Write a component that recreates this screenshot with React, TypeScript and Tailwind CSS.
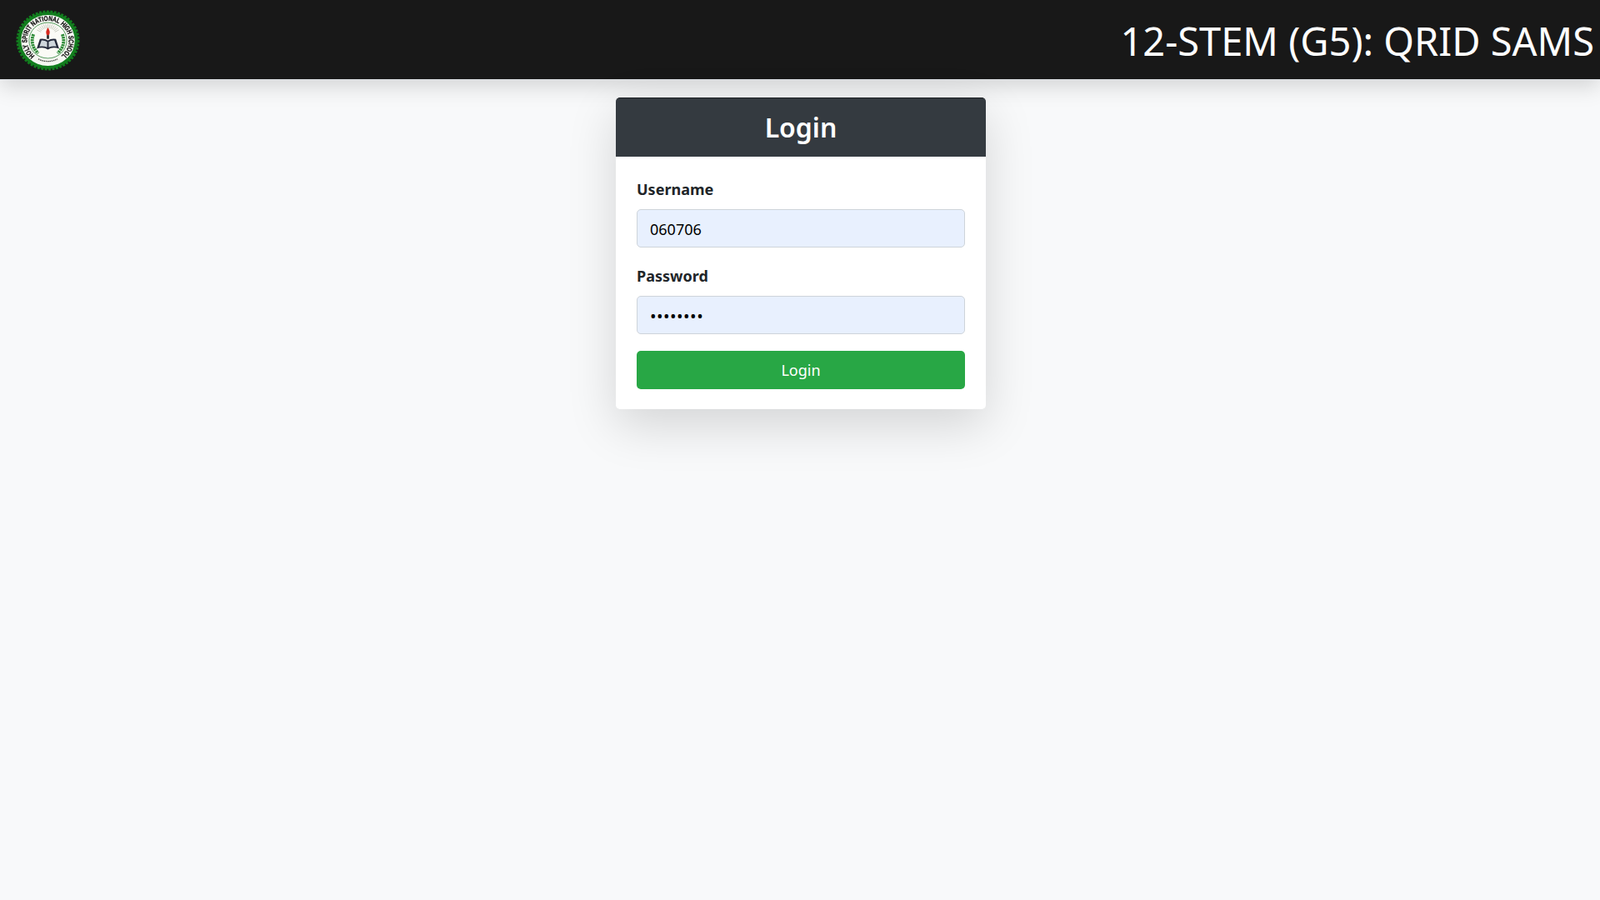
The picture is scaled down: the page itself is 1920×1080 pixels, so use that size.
const rays = Array.from({ length: 13 }, (_, i) => -150 + i * 10)

function SchoolLogo() {
  return (
    <svg viewBox="0 0 80 80" preserveAspectRatio="none" className="mt-[2px] w-[77px] h-[73px] blur-[0.4px]">
      <defs>
        <path id="ringText" d="M 24.5 61 A 26 26 0 1 1 55.5 61" />
      </defs>
      <circle cx="40" cy="40" r="37.5" fill="#127d1e" stroke="#127d1e" strokeWidth="4" strokeDasharray="3 1.6" />
      <circle cx="40" cy="40" r="33.5" fill="#f5f7f2" />
      <circle cx="40" cy="40" r="23.5" fill="#fbfbf6" stroke="#1d7a2a" strokeWidth="0.8" />
      <text fontFamily="'Liberation Sans', sans-serif" fontSize="9" fontWeight="700" fill="#0c0c0c" stroke="#0c0c0c" strokeWidth="0.3">
        <textPath href="#ringText" startOffset="50%" textAnchor="middle" textLength="127" lengthAdjust="spacingAndGlyphs">
          HOLY SPIRIT NATIONAL HIGH SCHOOL
        </textPath>
      </text>
      {rays.map((a) => (
        <line
          key={a}
          x1={40 + 10 * Math.cos((a * Math.PI) / 180)}
          y1={34 + 10 * Math.sin((a * Math.PI) / 180)}
          x2={40 + 16 * Math.cos((a * Math.PI) / 180)}
          y2={34 + 16 * Math.sin((a * Math.PI) / 180)}
          stroke="#b9bdb0"
          strokeWidth="0.8"
        />
      ))}
      <path d="M22 32 Q17 46 28 57 M58 32 Q63 46 52 57" fill="none" stroke="#2b8a35" strokeWidth="4" strokeDasharray="2.5 0.8" />
      <path d="M40 23 Q43.5 28 41.5 33 L38.5 33 Q36.5 28 40 23 Z" fill="#d62a1e" />
      <rect x="38.5" y="33" width="3" height="5" fill="#333" />
      <path d="M26 51 L30 38 Q36 37 40 40 Q44 37 50 38 L54 51 Q46 48 40 52 Q34 48 26 51 Z" fill="#23283a" />
      <path d="M29.5 48 L32 40 Q36 39.5 39 42 L39 49 Q34 47 29.5 48 Z M50.5 48 L48 40 Q44 39.5 41 42 L41 49 Q46 47 50.5 48 Z" fill="#cfd6dc" />
      <path d="M26 64 Q40 71 54 64" fill="none" stroke="#f4f4ee" strokeWidth="5.5" />
      <path d="M28 64.5 Q40 70.5 52 64.5" fill="none" stroke="#3a3f3a" strokeWidth="1.4" strokeDasharray="1.6 0.8" />
    </svg>
  )
}

function Field({ label, type, value, className }: { label: string; type: string; value: string; className: string }) {
  return (
    <div className={className}>
      <label className="block mb-[10px] text-[18px] leading-[27px] font-bold text-[#212529]">{label}</label>
      <input
        type={type}
        value={value}
        readOnly
        className={`block w-full h-[46px] px-[15px] text-black bg-[#e8f0fe] border border-[#ced4da] rounded-[5px] outline-none ${
          type === 'password' ? 'pt-[3px] text-[20px] tracking-[0.5px]' : 'pt-[1px] text-[18px]'
        }`}
      />
    </div>
  )
}

export default function App() {
  return (
    <div className="min-h-screen bg-[#f8f9fa] font-['Noto_Sans','Open_Sans',sans-serif]">
      <header className="h-[96px] flex items-center justify-between pl-[19px] pr-[7px] bg-[#181818] border-b border-[#dee2e6] shadow-[0_8px_24px_rgba(0,0,0,0.15)]">
        <SchoolLogo />
        <h1 className="pt-[3px] text-[47px] leading-none font-normal text-white whitespace-nowrap">12-STEM (G5): QRID SAMS</h1>
      </header>
      <main className="flex justify-center pt-[21px] pl-[2px]">
        <div className="w-[444px] bg-white rounded-[5px] shadow-[0_19px_58px_rgba(0,0,0,0.15)]">
          <div className="h-[71px] flex items-center justify-center bg-[#343a40] border-t border-[#1d2125] rounded-t-[5px]">
            <h2 className="text-[32px] font-semibold text-white">Login</h2>
          </div>
          <form className="px-[25px] pt-[26px] pb-[24px]">
            <Field className="mb-[21px]" label="Username" type="text" value="060706" />
            <Field className="mb-[20px]" label="Password" type="password" value="12345678" />
            <button type="button" className="block w-full h-[46px] text-[18px] text-white bg-[#28a745] rounded-[5px]">
              Login
            </button>
          </form>
        </div>
      </main>
    </div>
  )
}
